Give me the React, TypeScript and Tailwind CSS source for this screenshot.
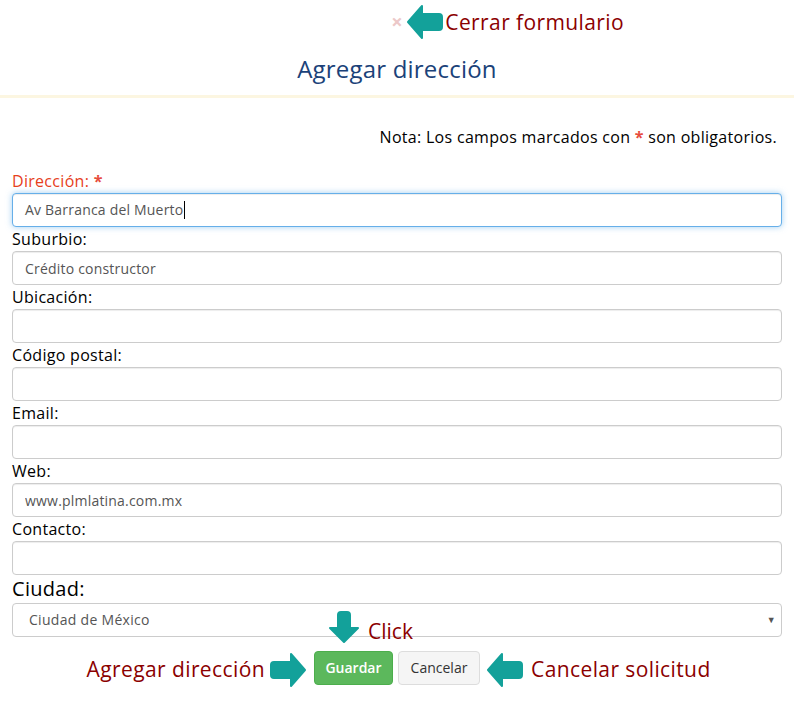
import type { ReactNode } from "react";

const FONT = { fontFamily: '"Comic Sans MS", "Open Sans", sans-serif' };

function ArrowLeft({ className }: { className?: string }) {
  return (
    <svg className={className} viewBox="0 0 38 36" width="38" height="36">
      <path
        d="M2 18 L16 2 L16 10 L33 10 Q36 10 36 13 L36 23 Q36 26 33 26 L16 26 L16 34 Z"
        fill="#13a19a"
        stroke="#13a19a"
        strokeWidth="2"
        strokeLinejoin="round"
      />
    </svg>
  );
}

function ArrowRight({ className }: { className?: string }) {
  return (
    <svg className={className} viewBox="0 0 38 36" width="38" height="36">
      <path
        d="M36 18 L22 2 L22 10 L5 10 Q2 10 2 13 L2 23 Q2 26 5 26 L22 26 L22 34 Z"
        fill="#13a19a"
        stroke="#13a19a"
        strokeWidth="2"
        strokeLinejoin="round"
      />
    </svg>
  );
}

function ArrowDown({ className }: { className?: string }) {
  return (
    <svg className={className} viewBox="0 0 32 33" width="32" height="33">
      <path
        d="M16 31 L2 17 L10 17 L10 4 Q10 1 13 1 L19 1 Q22 1 22 4 L22 17 L30 17 Z"
        fill="#13a19a"
        stroke="#13a19a"
        strokeWidth="2"
        strokeLinejoin="round"
      />
    </svg>
  );
}

function Field({ label, children }: { label: string; children: ReactNode }) {
  return (
    <div>
      <label className="flex h-6 items-center text-base tracking-[0.3px] text-black">{label}</label>
      {children}
    </div>
  );
}

function TextInput({ value = "" }: { value?: string }) {
  return (
    <input
      className="block h-[34px] w-full rounded border border-[#cccccc] bg-white px-3 text-sm tracking-[0.2px] text-[#555555] shadow-[inset_0_1px_1px_rgba(0,0,0,0.075)] outline-none"
      defaultValue={value}
      readOnly
      style={FONT}
    />
  );
}

export default function App() {
  const fields = [
    { label: "Suburbio:", value: "Crédito constructor" },
    { label: "Ubicación:", value: "" },
    { label: "Código postal:", value: "" },
    { label: "Email:", value: "" },
    { label: "Web:", value: "www.plmlatina.com.mx" },
    { label: "Contacto:", value: "" },
  ];

  return (
    <div className="min-h-[713px] w-[794px] bg-white" style={FONT}>
      <div className="relative flex h-[44px] items-center justify-center">
        <span className="relative text-xl font-bold leading-none text-[#ecc8c8]">
          ×
          <span className="absolute left-[15px] top-1/2 flex -translate-y-1/2 items-center gap-[1px] whitespace-nowrap text-[21px] font-normal tracking-[0.4px] text-[#8b0000]">
            <ArrowLeft />
            Cerrar formulario
          </span>
        </span>
      </div>
      <div className="flex h-[51px] items-center justify-center pb-[2px]">
        <h1 className="text-2xl tracking-[0.2px] text-[#1b4279]">Agregar dirección</h1>
      </div>
      <div className="h-[3px] bg-[#fcf6e1]" />

      <div className="px-3 pb-6">
        <p className="mt-[27px] flex h-6 items-center justify-end pr-[5px] text-base tracking-[0.3px] text-black">
          Nota: Los campos marcados con&nbsp;<span className="font-bold text-[#e74c3c]">*</span>&nbsp;son obligatorios.
        </p>

        <div className="mt-5">
          <label className="flex h-6 items-center text-base tracking-[0.3px] text-[#e6401c]">
            Dirección:&nbsp;<span className="font-bold text-[#e74c3c]">*</span>
          </label>
          <div className="flex h-[34px] w-full items-center rounded border border-[#66afe9] bg-white px-3 text-sm tracking-[0.2px] text-[#555555] shadow-[inset_0_1px_1px_rgba(0,0,0,0.075),0_0_6px_rgba(102,175,233,0.6)]">
            Av Barranca del Muerto
            <span className="ml-[1px] inline-block h-[18px] w-px bg-black" />
          </div>
        </div>

        {fields.map((f) => (
          <Field key={f.label} label={f.label}>
            <TextInput value={f.value} />
          </Field>
        ))}

        <div>
          <label className="flex h-7 items-center text-xl tracking-[0.3px] text-black">Ciudad:</label>
          <div className="relative flex h-[34px] w-full items-center rounded border border-[#cccccc] bg-white pl-4 text-sm tracking-[0.3px] text-[#555555]">
            Ciudad de México
            <span className="absolute right-[5px] top-1/2 -translate-y-1/2 text-[9px] text-[#555555]">▼</span>
          </div>
        </div>

        <div className="relative mt-[14px] flex justify-center gap-[5px]">
          <div className="absolute left-[316px] top-[-40px] flex items-end gap-2">
            <ArrowDown />
            <span className="relative top-[-2px] text-[21px] leading-none text-[#8b0000]">Click</span>
          </div>
          <div className="absolute right-[475px] top-0 flex h-[37px] items-center gap-[4px] whitespace-nowrap text-[21px] tracking-[0.4px] text-[#8b0000]">
            Agregar dirección
            <ArrowRight />
          </div>
          <button
            className="h-[34px] w-[79px] rounded border border-[#4cae4c] bg-[#5cb85c] text-sm font-semibold text-white"
            type="button"
          >
            Guardar
          </button>
          <button
            className="h-[34px] w-[82px] rounded border border-[#dddddd] bg-[#f5f5f5] text-sm text-[#333333]"
            type="button"
          >
            Cancelar
          </button>
          <div className="absolute left-[474px] top-0 flex h-[37px] items-center gap-[7px] whitespace-nowrap text-[21px] tracking-[0.4px] text-[#8b0000]">
            <ArrowLeft />
            Cancelar solicitud
          </div>
        </div>
      </div>
    </div>
  );
}
